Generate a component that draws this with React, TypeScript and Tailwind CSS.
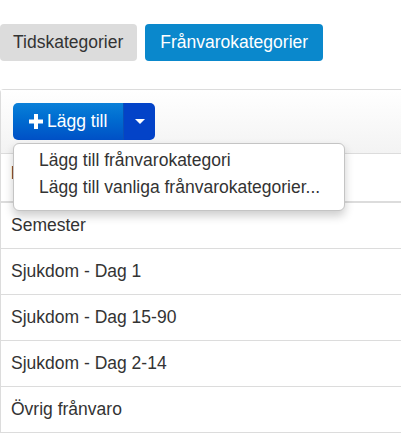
import { useState } from "react";

type Category = {
  name: string;
};

const categories: Category[] = [
  { name: "Semester" },
  { name: "Sjukdom - Dag 1" },
  { name: "Sjukdom - Dag 15-90" },
  { name: "Sjukdom - Dag 2-14" },
  { name: "Övrig frånvaro" },
];

const PlusIcon = () => (
  <svg width="14" height="15" viewBox="0 0 14 15" aria-hidden="true">
    <path d="M5 0h4v5.5h5v4H9V15H5V9.5H0v-4h5z" fill="currentColor" />
  </svg>
);

const App = () => {
  const [tab, setTab] = useState<string>("franvaro");
  const [isOpen, setIsOpen] = useState<boolean>(true);

  return (
    <div className="w-[401px] h-[434px] overflow-hidden bg-white font-['Liberation_Sans',Arial,sans-serif] text-[17.5px] text-[#333]">
      {/* TABS */}
      <div className="flex gap-2 pt-[24px]">
        <button
          type="button"
          onClick={() => setTab("tid")}
          className={`h-[37px] rounded-[4px] pl-[13px] pr-[14px] leading-[25px] ${
            tab === "tid" ? "bg-[#0a88cc] text-white" : "bg-[#dcdcdc] text-[#333]"
          }`}
        >
          Tidskategorier
        </button>
        <button
          type="button"
          onClick={() => setTab("franvaro")}
          className={`h-[37px] rounded-[4px] px-[15px] leading-[25px] ${
            tab === "franvaro" ? "bg-[#0a88cc] text-white" : "bg-[#dcdcdc] text-[#333]"
          }`}
        >
          Frånvarokategorier
        </button>
      </div>

      {/* PANEL */}
      <div className="mt-[28px] border-t border-l border-[#dcdcdc] rounded-tl-[4px]">
        <div className="bg-gradient-to-b from-white to-[#f3f3f3] pt-[13px] pb-[13px] pl-[12px]">
          <div className="relative inline-flex">
            <div className="flex h-[37px] rounded-[5px] overflow-hidden text-white">
              <button
                type="button"
                className="flex items-center gap-[4px] pl-[16px] pr-[16px] bg-gradient-to-b from-[#0b80d8] to-[#0050c6] leading-[25px]"
              >
                <PlusIcon />
                <span>Lägg till</span>
              </button>
              <button
                type="button"
                onClick={() => setIsOpen((prev) => !prev)}
                className="flex w-[32px] items-center justify-center bg-[#0343c8] border-l border-[#0a4fb8]"
              >
                <span className="block h-0 w-0 border-x-[5px] border-t-[5px] border-x-transparent border-t-white" />
              </button>
            </div>

            {/* DROPDOWN MENU */}
            {isOpen && (
              <ul className="absolute left-0 top-[40px] z-10 w-[332px] rounded-[6px] border border-[#c4c4c4] bg-white pt-[3px] pb-[10px] shadow-[0_5px_10px_rgba(0,0,0,0.2)]">
                <li className="pl-[25px] leading-[26.5px] whitespace-nowrap">Lägg till frånvarokategori</li>
                <li className="pl-[25px] leading-[26.5px] whitespace-nowrap">
                  Lägg till vanliga frånvarokategorier...
                </li>
              </ul>
            )}
          </div>
        </div>

        {/* TABLE */}
        <div className="border-t border-[#dcdcdc]">
          <div className="h-[49px] border-b-2 border-[#dcdcdc] pl-[10px] pt-[7px] font-bold leading-[25px]">
            Namn
          </div>
          {categories.map((item, inx) => (
            <div
              key={inx}
              className="h-[46px] border-b border-[#dcdcdc] px-[10px] py-[10px] leading-[25px]"
            >
              {item.name}
            </div>
          ))}
        </div>
      </div>
    </div>
  );
};

export default App;
